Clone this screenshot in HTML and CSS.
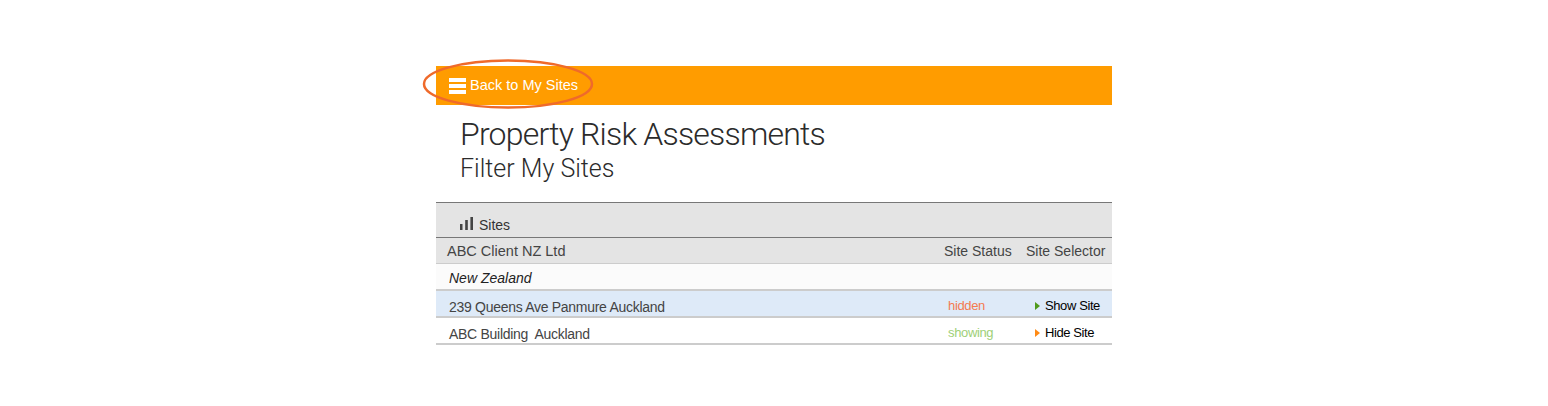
FILE: index.html
```html
<!DOCTYPE html>
<html lang="en">
<head>
    <meta charset="UTF-8">
    <title>Property Risk Assessments - Filter My Sites</title>
    <link rel="stylesheet" href="styles.css">
</head>
<body>
    <div class="panel">
        <div class="topbar">
            <a class="back-link" href="#">
                <span class="burger"><i></i><i></i><i></i></span>
                Back to My Sites
            </a>
            <svg class="callout" width="174" height="52" viewBox="0 0 174 52">
                <ellipse cx="87" cy="26" rx="84" ry="23.5" fill="none" stroke="#ef6a2b" stroke-width="2.5"/>
            </svg>
        </div>

        <div class="heading">
            <h1>Property Risk Assessments</h1>
            <h2>Filter My Sites</h2>
        </div>

        <div class="section-title">
            <svg width="13" height="13" viewBox="0 0 13 13">
                <rect x="0" y="7" width="2.5" height="6" fill="#444"/>
                <rect x="5.2" y="3" width="2.6" height="10" fill="#444"/>
                <rect x="10.4" y="0" width="2.6" height="13" fill="#444"/>
            </svg>
            <span>Sites</span>
        </div>

        <table class="sites">
            <thead>
                <tr>
                    <th class="col-name">ABC Client NZ Ltd</th>
                    <th class="col-status">Site Status</th>
                    <th class="col-selector">Site Selector</th>
                </tr>
            </thead>
            <tbody>
                <tr class="region">
                    <td colspan="3">New Zealand</td>
                </tr>
                <tr class="selected">
                    <td class="col-name">239 Queens Ave Panmure Auckland</td>
                    <td class="col-status hidden-site">hidden</td>
                    <td class="col-selector"><span class="arrow arrow-show"></span>Show Site</td>
                </tr>
                <tr>
                    <td class="col-name">ABC Building&nbsp; Auckland</td>
                    <td class="col-status showing-site">showing</td>
                    <td class="col-selector"><span class="arrow arrow-hide"></span>Hide Site</td>
                </tr>
            </tbody>
        </table>
    </div>
</body>
</html>
```

FILE: styles.css
```css
body {
    font-family: "Liberation Sans", Arial, sans-serif;
    margin: 0;
    background-color: #fff;
}

.panel {
    width: 676px;
    margin: 0 auto;
    padding-top: 66px;
}

.topbar {
    position: relative;
    height: 39px;
    background-color: #ff9c00;
}

.back-link {
    display: flex;
    align-items: center;
    gap: 4px;
    height: 38px;
    padding: 0 0 1px 13px;
    color: #fff;
    font-size: 14.5px;
    text-decoration: none;
}

.burger {
    display: flex;
    flex-direction: column;
    gap: 2px;
    width: 17px;
    padding-top: 1px;
}

.burger i {
    display: block;
    height: 4px;
    background-color: #fff;
}

.callout {
    position: absolute;
    left: -15px;
    top: -8px;
}

.heading {
    padding: 11px 0 0 24px;
    height: 86px;
    color: #2b2b2b;
}

h1 {
    margin: 0;
    font-family: Roboto, sans-serif;
    font-size: 32px;
    font-weight: 300;
    letter-spacing: -0.8px;
    line-height: 36px;
}

h2 {
    margin: 0;
    padding-top: 2px;
    font-family: Roboto, sans-serif;
    font-size: 25px;
    font-weight: 300;
    line-height: 30px;
}

.section-title {
    display: flex;
    align-items: flex-end;
    gap: 6px;
    height: 34px;
    padding-left: 24px;
    background-color: #e4e4e4;
    border-top: 1px solid #777;
    border-bottom: 1px solid #777;
    color: #333;
    font-size: 14px;
}

.section-title svg {
    margin-bottom: 7px;
}

.section-title span {
    margin-bottom: 4px;
}

.sites {
    width: 100%;
    border-collapse: collapse;
    font-size: 14px;
    letter-spacing: -0.29px;
}

.sites th {
    height: 25px;
    padding: 0;
    background-color: #e4e4e4;
    border-bottom: 1px solid #ccc;
    color: #444;
    font-size: 14px;
    font-weight: normal;
    letter-spacing: 0;
    text-align: left;
}

.sites td {
    height: 19px;
    padding: 6px 0 0;
    border-bottom: 2px solid #ccc;
    color: #444;
}

.sites .col-name {
    padding-left: 13px;
}

.sites th.col-name {
    padding-left: 11px;
    font-size: 14.5px;
}

.sites .col-status {
    width: 82px;
}

.sites .col-selector {
    width: 86px;
}

.sites td.col-status {
    padding: 4px 0 0 4px;
    width: 78px;
    font-size: 13px;
    letter-spacing: -0.35px;
}

.sites td.col-selector {
    padding: 4px 0 0 9px;
    width: 77px;
    color: #000;
    font-size: 13px;
    letter-spacing: -0.4px;
}

.sites .region td {
    height: 23px;
    padding: 2px 0 0 13px;
    background-color: #fbfbfb;
    color: #222;
    font-size: 14px;
    font-style: italic;
    letter-spacing: 0;
}

.sites .selected td {
    background-color: #deeaf8;
}

.sites td.hidden-site {
    color: #f47a50;
}

.sites td.showing-site {
    color: #9ed077;
}

.arrow {
    display: inline-block;
    margin-right: 5px;
    border-top: 4px solid transparent;
    border-bottom: 4px solid transparent;
    border-left: 5px solid;
}

.arrow-show {
    color: #4f9a1c;
}

.arrow-hide {
    color: #ff8a14;
}
```
